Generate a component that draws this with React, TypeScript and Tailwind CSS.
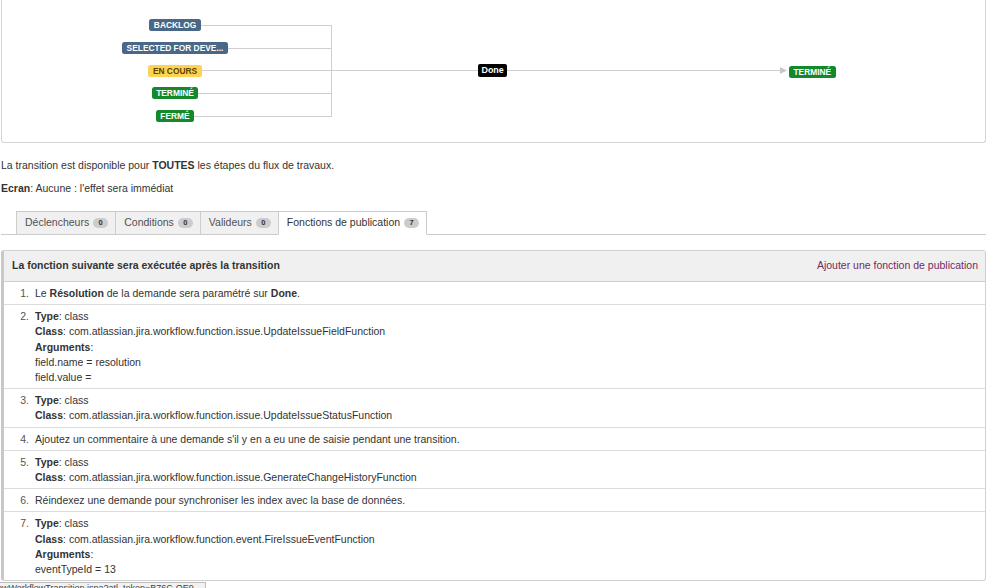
import React from "react";

function Lozenge({ children, kind }: { children: React.ReactNode; kind: "blue" | "yellow" | "green" }) {
  const cls =
    kind === "blue"
      ? "bg-[#4a6785] text-white"
      : kind === "yellow"
      ? "bg-[#ffd351] text-[#594300]"
      : "bg-[#14892c] text-white";
  return (
    <span
      className={`inline-block h-[12px] px-[4.5px] rounded-[2.5px] text-[8.4px] leading-[12px] font-bold uppercase whitespace-nowrap ${cls}`}
    >
      {children}
    </span>
  );
}

function Badge({ n }: { n: string }) {
  return (
    <span className="inline-flex items-center justify-center h-[10px] min-w-[15px] px-[4px] rounded-full bg-[#cccccc] text-[#333] text-[7.5px] font-bold leading-[10px]">
      {n}
    </span>
  );
}

function Tab({ label, n, active, first }: { label: string; n: string; active?: boolean; first?: boolean }) {
  return (
    <div
      className={`relative flex items-center gap-[4px] h-[24px] pl-[8px] pr-[7px] border border-[#cccccc] ${
        first ? "" : "-ml-px"
      } ${active ? "bg-white border-b-white z-10 text-[#333]" : "bg-[#f0f0f0] text-[#505050]"}`}
    >
      <span>{label}</span>
      <Badge n={n} />
    </div>
  );
}

function Row({ n, children, first }: { n: string; children: React.ReactNode; first?: boolean }) {
  return (
    <div className={`flex pt-[4px] pb-[3px] border-t ${first ? "border-[#cfcfcf]" : "border-[#dcdcdc]"}`}>
      <span className="w-[25px] shrink-0 text-right text-[#555]">{n}</span>
      <div className="pl-[6px]">{children}</div>
    </div>
  );
}

function TypeClass({ cls, args }: { cls: string; args?: string[] }) {
  return (
    <>
      <div>
        <b>Type</b>: class
      </div>
      <div>
        <b>Class</b>: {cls}
      </div>
      {args && (
        <>
          <div>
            <b>Arguments</b>:
          </div>
          {args.map((a) => (
            <div key={a}>{a}</div>
          ))}
        </>
      )}
    </>
  );
}

export default function App() {
  return (
    <div className="relative w-[999px] h-[588px] overflow-hidden bg-white text-[#333] text-[10.5px] leading-[15.2px] font-['Liberation_Sans',Arial,sans-serif]">
      {/* Workflow diagram */}
      <div className="relative ml-px w-[985px] h-[143px] border border-t-0 border-[#d4d4d4] rounded-b-[3px]">
        <svg className="absolute left-[-2px] top-0" width="999" height="143">
          <g stroke="#cfcfcf" strokeWidth="1" fill="none">
            <line x1="175" y1="25.5" x2="331.5" y2="25.5" />
            <line x1="175" y1="48.5" x2="331.5" y2="48.5" />
            <line x1="175" y1="93.5" x2="331.5" y2="93.5" />
            <line x1="175" y1="116.5" x2="331.5" y2="116.5" />
            <line x1="331.5" y1="25" x2="331.5" y2="117" />
            <line x1="175" y1="70.5" x2="781" y2="70.5" />
          </g>
          <polygon points="780,67 787,70.5 780,74" fill="#c8c8c8" />
        </svg>

        <div className="absolute left-[95.5px] top-[19px] w-[155px] flex flex-col items-center gap-[10.75px]">
          <Lozenge kind="blue">Backlog</Lozenge>
          <Lozenge kind="blue">Selected for deve...</Lozenge>
          <Lozenge kind="yellow">En cours</Lozenge>
          <Lozenge kind="green">Terminé</Lozenge>
          <Lozenge kind="green">Fermé</Lozenge>
        </div>

        <span className="absolute left-[476px] top-[64px] h-[13px] px-[3.5px] rounded-[2px] bg-black text-white text-[8.9px] font-bold leading-[13px]">
          Done
        </span>

        <div className="absolute left-[787px] top-[64px]">
          <Lozenge kind="green">Terminé</Lozenge>
        </div>
      </div>

      {/* Info text */}
      <p className="mt-[14.5px] pl-px">
        La transition est disponible pour <b>TOUTES</b> les étapes du flux de travaux.
      </p>
      <p className="mt-[7.8px] pl-px">
        <b>Ecran</b>: Aucune : l'effet sera immédiat
      </p>

      {/* Tabs */}
      <div className="mt-[15.3px] ml-px w-[985px] h-[24px] flex pl-[15px] border-b border-[#cccccc]">
        <Tab label="Déclencheurs" n="0" first />
        <Tab label="Conditions" n="0" />
        <Tab label="Valideurs" n="0" />
        <Tab label="Fonctions de publication" n="7" active />
      </div>

      {/* Panel */}
      <div className="mt-[15px] ml-px w-[985px] border border-[#d0d0d0] border-l-[3px] border-l-[#c8c8c8] rounded-[3px] overflow-hidden">
        <div className="h-[30px] flex items-center justify-between pl-[8px] pr-[7px] bg-[#f0f0f0]">
          <span className="font-bold">La fonction suivante sera exécutée après la transition</span>
          <span className="text-[#74295f]">Ajouter une fonction de publication</span>
        </div>
        <Row n="1." first>
          Le <b>Résolution</b> de la demande sera paramétré sur <b>Done</b>.
        </Row>
        <Row n="2.">
          <TypeClass
            cls="com.atlassian.jira.workflow.function.issue.UpdateIssueFieldFunction"
            args={["field.name = resolution", "field.value ="]}
          />
        </Row>
        <Row n="3.">
          <TypeClass cls="com.atlassian.jira.workflow.function.issue.UpdateIssueStatusFunction" />
        </Row>
        <Row n="4.">Ajoutez un commentaire à une demande s'il y en a eu une de saisie pendant une transition.</Row>
        <Row n="5.">
          <TypeClass cls="com.atlassian.jira.workflow.function.issue.GenerateChangeHistoryFunction" />
        </Row>
        <Row n="6.">Réindexez une demande pour synchroniser les index avec la base de données.</Row>
        <Row n="7.">
          <TypeClass
            cls="com.atlassian.jira.workflow.function.event.FireIssueEventFunction"
            args={["eventTypeId = 13"]}
          />
        </Row>
      </div>

      {/* Browser status bar */}
      <div className="absolute left-0 top-[582px] w-[206px] h-[12px] bg-[#f2f2f2] border-t border-r border-[#bdbdbd] overflow-hidden">
        <div className="-ml-[3px] text-[9px] leading-[11px] text-[#444] whitespace-nowrap">
          owWorkflowTransition.jspa?atl_token=B76C-OE9...
        </div>
      </div>
    </div>
  );
}
